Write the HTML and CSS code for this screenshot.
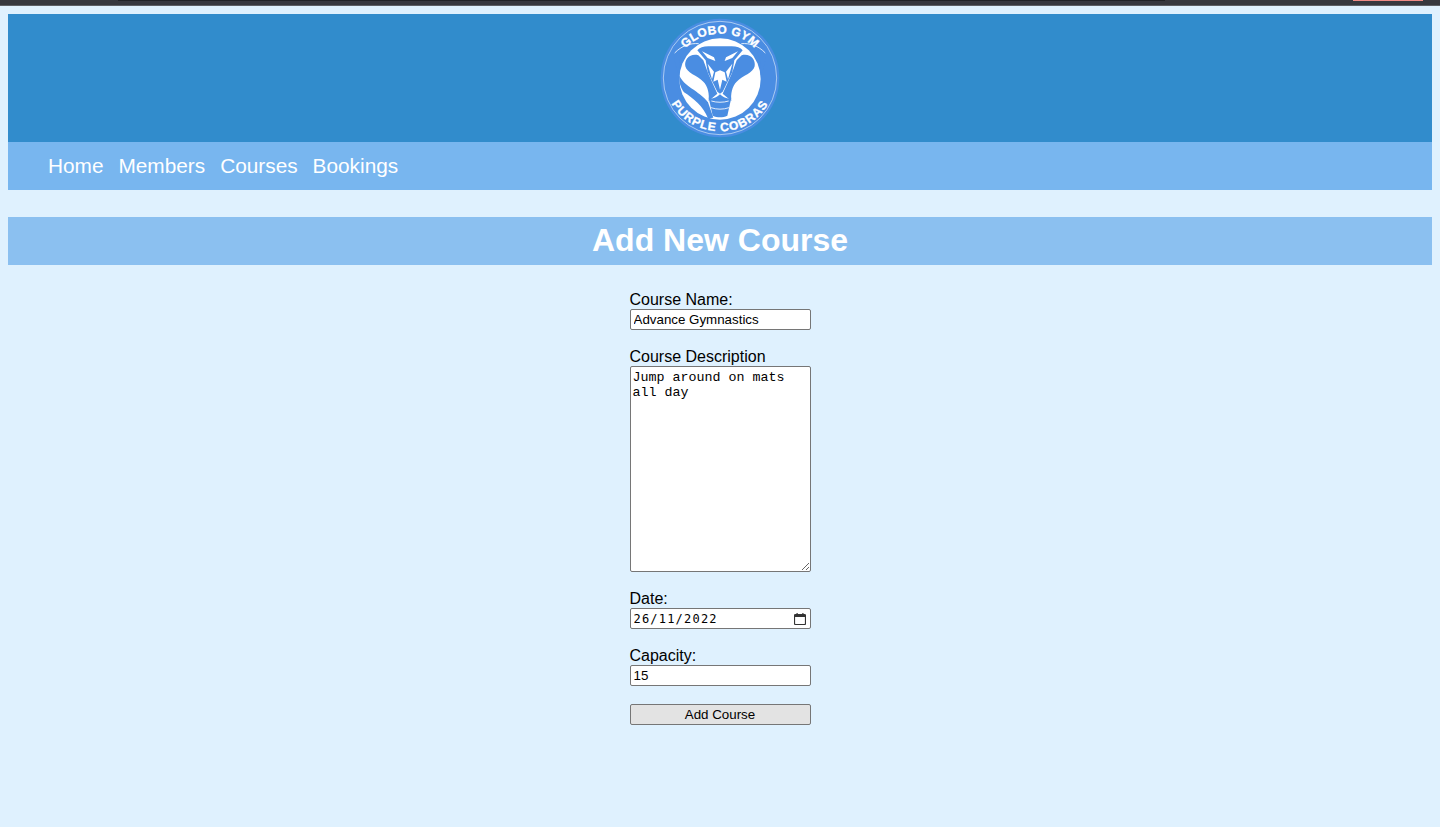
FILE: index.html
```html
<!DOCTYPE html>
<html lang="en">
<head>
    <meta charset="UTF-8">
    <meta name="viewport" content="width=device-width, initial-scale=1.0">
    <title>Add New Course</title>
    <link rel="stylesheet" href="styles.css">
</head>
<body>
    <div class="browser-edge">
        <div class="edge-dark"></div>
        <div class="edge-pink"></div>
    </div>

    <div class="page">
        <header class="banner">
            <svg class="logo" viewBox="60 23 360 360" width="120" height="120">
                <defs>
                    <path id="arcTop" d="M100 203 A140 133 0 0 1 380 203"/>
                    <path id="arcBottom" d="M74 203 A166 160 0 0 0 406 203"/>
                    <g id="half">
                        <path class="blue" d="M175 135 C150 128 132 148 136 168 C140 188 172 196 190 214 C204 228 208 250 206 272 L232 250 L205 190 L190 150 Z"/>
                        <path class="blue" d="M240 108 L205 108 C190 108 178 112 172 120 L197 150 L203 185 L232 244 L240 250 Z"/>
                        <path class="white-fill" d="M186 123 L222 141 L226 152 L203 143 Z"/>
                        <path class="white-fill" d="M203 160 L222 184 L216 207 Z"/>
                        <path class="white-fill" d="M240 180 L226 186 L220 214 L233 208 L240 238 Z"/>
                        <path class="blue" d="M104 128 C125 108 150 100 176 102 L160 110 C132 114 118 135 118 165 L118 195 C108 175 102 150 104 128 Z"/>
                        <path class="white-line" d="M104 128 C125 106 150 98 176 100"/>
                    </g>
                </defs>
                <circle class="blue" cx="240" cy="203" r="178"/>
                <circle class="ring" cx="240" cy="203" r="170"/>
                <circle class="white-fill" cx="240" cy="206" r="122"/>
                <use href="#half"/>
                <use href="#half" transform="matrix(-1 0 0 1 480 0)"/>
                <path class="blue" d="M118 195 C130 228 176 240 204 276 L220 322 L204 324 C190 288 160 264 132 246 C122 232 116 215 118 195 Z"/>
                <path class="blue" d="M206 262 C218 268 228 262 240 252 C252 262 262 268 274 262 L262 316 C248 322 232 322 218 316 Z"/>
                <path class="white-line" d="M213 292 C230 298 250 298 267 292"/>
                <path class="white-line" d="M214 272 C230 277 250 277 266 272"/>
                <text class="logo-text"><textPath href="#arcTop" startOffset="50%" text-anchor="middle">GLOBO GYM</textPath></text>
                <text class="logo-text wide"><textPath href="#arcBottom" startOffset="50%" text-anchor="middle">PURPLE COBRAS</textPath></text>
            </svg>
        </header>

        <nav class="menu">
            <a href="#">Home</a>
            <a href="#">Members</a>
            <a href="#">Courses</a>
            <a href="#">Bookings</a>
        </nav>

        <h1 class="title">Add New Course</h1>

        <form class="course-form">
            <div class="field">
                <label for="name">Course Name:</label>
                <input class="box" type="text" id="name" value="Advance Gymnastics">
            </div>
            <div class="field">
                <label for="description">Course Description</label>
                <textarea class="box" id="description">Jump around on mats all day</textarea>
            </div>
            <div class="field">
                <label for="date">Date:</label>
                <div class="box date-box">
                    <input type="text" id="date" value="26/11/2022">
                    <svg class="calendar" viewBox="0 0 12 12" width="12" height="12">
                        <path d="M1.5 1.5h9a1 1 0 0 1 1 1v8a1 1 0 0 1-1 1h-9a1 1 0 0 1-1-1v-8a1 1 0 0 1 1-1z" fill="none" stroke="#333" stroke-width="1.2"/>
                        <path d="M1 2h10v2h-10z M2.5 0h1.2v2h-1.2z M8.3 0h1.2v2h-1.2z" fill="#333"/>
                    </svg>
                </div>
            </div>
            <div class="field">
                <label for="capacity">Capacity:</label>
                <input class="box" type="text" id="capacity" value="15">
            </div>
            <div class="field">
                <button class="box submit" type="button">Add Course</button>
            </div>
        </form>
    </div>
</body>
</html>
```

FILE: styles.css
```css
html, body {
    height: 100%;
}
body {
    margin: 0;
    background-color: #dff1fe;
    font-family: "Liberation Sans", Arial, sans-serif;
    color: #000;
    overflow: hidden;
}
.browser-edge {
    height: 5px;
    background-color: #37383e;
    border-bottom: 1px solid #5d5f64;
    box-sizing: content-box;
    display: flex;
    justify-content: space-between;
    padding-left: 118px;
    padding-right: 17px;
}
.edge-dark {
    width: 1047px;
    height: 1px;
    background-color: #222327;
}
.edge-pink {
    width: 70px;
    height: 1px;
    background-color: #f08a85;
}
.page {
    padding: 8px 8px 0;
}
.banner {
    height: 128px;
    background-color: #318ccc;
    display: flex;
    justify-content: center;
    align-items: center;
}
.logo {
    display: block;
}
.blue {
    fill: #4a8de2;
}
.white-fill {
    fill: #fff;
}
.white-line {
    fill: none;
    stroke: #fff;
    stroke-width: 2.5;
}
.ring {
    fill: none;
    stroke: #fff;
    stroke-width: 2;
    opacity: 0.8;
}
.logo-text {
    fill: #fff;
    stroke: #fff;
    stroke-width: 1;
    font-family: "Liberation Sans", Arial, sans-serif;
    font-weight: bold;
    font-size: 36px;
    letter-spacing: 1px;
}
.logo-text.wide {
    letter-spacing: 3px;
}
.menu {
    height: 48px;
    background-color: #78b6ef;
    display: flex;
    align-items: center;
    gap: 15px;
    padding-left: 40px;
}
.menu a {
    color: #fff;
    font-size: 20.8px;
    text-decoration: none;
}
.title {
    margin: 27px 0 0;
    height: 48px;
    line-height: 46px;
    background-color: #8bc0f0;
    color: #fff;
    font-size: 32px;
    text-align: center;
}
.course-form {
    width: 181px;
    margin: 26px auto 0;
    display: flex;
    flex-direction: column;
    gap: 18px;
}
.field label {
    display: block;
    font-size: 16px;
    line-height: 18px;
}
.box {
    display: block;
    box-sizing: border-box;
    width: 100%;
    height: 21px;
    margin: 0;
    padding: 1px 3px;
    border: 1px solid #767676;
    border-radius: 2px;
    background-color: #fff;
    color: #000;
    font-family: "Liberation Sans", Arial, sans-serif;
    font-size: 13.33px;
}
textarea.box {
    height: 206px;
    padding: 3px 2px 1px;
    font-family: "Liberation Mono", monospace;
    line-height: 15px;
    resize: vertical;
}
.date-box {
    display: flex;
    align-items: center;
    justify-content: space-between;
    padding-right: 4px;
}
.date-box input {
    width: 130px;
    border: none;
    padding: 0;
    margin: 0;
    outline: none;
    background: none;
    font-family: "DejaVu Sans Mono", monospace;
    font-size: 12px;
    letter-spacing: 1.2px;
}
.calendar {
    display: block;
}
.submit {
    background-color: #e3e3e3;
    padding: 1px 6px;
    text-align: center;
}
```
